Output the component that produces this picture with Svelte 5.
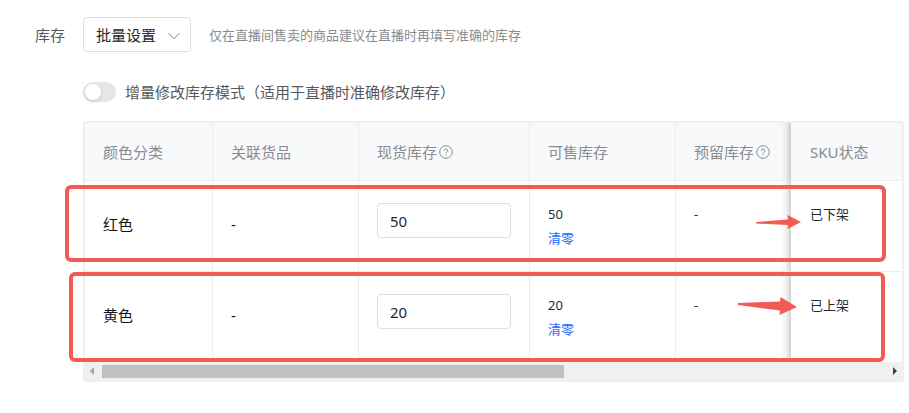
<script>
    let mode = $state("batch");
    let incremental = $state(false);
    let rows = $state([
        { color: "红色", goods: "-", stock: 50, sellable: 50, reserved: "-", status: "已下架" },
        { color: "黄色", goods: "-", stock: 20, sellable: 20, reserved: "-", status: "已上架" },
    ]);

    function clearStock(row) {
        row.stock = 0;
        row.sellable = 0;
    }
</script>

{#snippet help()}
    <svg class="help" viewBox="0 0 14 14" aria-hidden="true">
        <circle cx="7" cy="7" r="6.3" />
        <path d="M5.3 5.7a1.7 1.7 0 1 1 2.5 1.5c-.6.3-.8.6-.8 1.2M7 9.4v1" />
    </svg>
{/snippet}

<div class="page">
    <div class="form-row">
        <label class="form-label" for="mode">库存</label>
        <div class="select-wrap">
            <select id="mode" bind:value={mode}>
                <option value="batch">批量设置</option>
                <option value="single">单独设置</option>
            </select>
            <svg class="chevron" viewBox="0 0 12 8" aria-hidden="true">
                <path d="M0.5 1 6 6.8 11.5 1" />
            </svg>
        </div>
        <span class="hint">仅在直播间售卖的商品建议在直播时再填写准确的库存</span>
    </div>

    <div class="content">
        <label class="switch-row">
            <input class="switch" type="checkbox" bind:checked={incremental} />
            <span>增量修改库存模式（适用于直播时准确修改库存）</span>
        </label>

        <div class="table-wrap">
            <table>
                <colgroup>
                    <col class="col-color" />
                    <col class="col-goods" />
                    <col class="col-stock" />
                    <col class="col-goods" />
                    <col />
                    <col class="col-status" />
                </colgroup>
                <thead>
                    <tr>
                        <th>颜色分类</th>
                        <th>关联货品</th>
                        <th><span class="head">现货库存{@render help()}</span></th>
                        <th>可售库存</th>
                        <th class="last"><span class="head">预留库存{@render help()}</span></th>
                        <th class="fixed">SKU状态</th>
                    </tr>
                </thead>
                <tbody>
                    {#each rows as row}
                        <tr>
                            <td class="middle">{row.color}</td>
                            <td class="middle">{row.goods}</td>
                            <td>
                                <input
                                    class="stock"
                                    type="text"
                                    aria-label="{row.color}现货库存"
                                    bind:value={row.stock}
                                />
                            </td>
                            <td class="small">
                                <div>{row.sellable}</div>
                                <button type="button" onclick={() => clearStock(row)}>清零</button>
                            </td>
                            <td class="small last">{row.reserved}</td>
                            <td class="small fixed">{row.status}</td>
                        </tr>
                    {/each}
                </tbody>
            </table>

            <div class="scrollbar">
                <svg class="arrow-left" viewBox="0 0 4 8" aria-hidden="true"><path d="M4 0v8L0 4z" /></svg>
                <div class="track"><div class="thumb"></div></div>
                <svg class="arrow-right" viewBox="0 0 4 8" aria-hidden="true"><path d="M0 0v8l4-4z" /></svg>
            </div>

            <div class="mark mark-off">
                <svg viewBox="0 0 45 14" width="45" height="14">
                    <path d="M0 7 32 4.5 31.5 0 45 7 31.5 14 32 10 0 8.5z" />
                </svg>
            </div>
            <div class="mark mark-on">
                <svg viewBox="0 0 59 18" width="59" height="18">
                    <path d="M0 6 42 4.5 42.5 0 59 10 41.5 18 42 13.5 0 8z" />
                </svg>
            </div>
        </div>
    </div>
</div>

<style>
    :global(body) {
        background: #fff;
    }

    .page {
        padding: 17px 5px 31px 35px;
        font-family: "Noto Sans", "Noto Sans CJK SC", sans-serif;
        font-size: 15px;
        line-height: 24px;
        color: #55585c;
    }

    .form-row {
        display: flex;
        align-items: center;
    }

    .form-label {
        width: 48px;
    }

    .select-wrap {
        position: relative;
        width: 108px;
        margin-right: 18px;
    }

    select,
    .stock {
        box-sizing: border-box;
        display: block;
        height: 35px;
        padding: 0 12px;
        border: 1px solid #dcdee1;
        border-radius: 4px;
        background: #fff;
        color: #252931;
        font-family: inherit;
        font-size: 15px;
        outline: none;
    }

    select {
        width: 100%;
        appearance: none;
    }

    select:focus,
    .stock:focus {
        border-color: #1966ff;
    }

    .chevron {
        position: absolute;
        right: 11px;
        top: 15px;
        width: 12px;
        height: 8px;
        fill: none;
        stroke: #898b8f;
        pointer-events: none;
    }

    .hint {
        font-size: 13px;
        color: #898b8f;
    }

    .content {
        padding-left: 48px;
    }

    .switch-row {
        display: flex;
        align-items: center;
        gap: 9px;
        padding: 28px 0 17px;
    }

    .switch {
        appearance: none;
        width: 33px;
        height: 20px;
        margin: 0;
        padding: 2px;
        box-sizing: border-box;
        border-radius: 10px;
        background: #e6e6e6;
    }

    .switch::before {
        content: "";
        display: block;
        width: 16px;
        height: 16px;
        border-radius: 50%;
        background: #fff;
        box-shadow: 0 2px 4px rgba(0, 0, 0, 0.12);
    }

    .switch:checked {
        background: #1966ff;
    }

    .switch:checked::before {
        margin-left: auto;
    }

    .table-wrap {
        position: relative;
        border: 2px solid #eeeff0;
        border-radius: 4px;
    }

    table {
        width: 100%;
        table-layout: fixed;
        border-collapse: separate;
        border-spacing: 0;
    }

    .col-color {
        width: 128px;
    }

    .col-goods {
        width: 146px;
    }

    .col-stock {
        width: 171px;
    }

    .col-status {
        width: 111px;
    }

    th,
    td {
        box-sizing: border-box;
        padding: 0 18px;
        border-right: 1px solid #ebecee;
        border-bottom: 1px solid #ebecee;
        text-align: left;
        white-space: nowrap;
    }

    th {
        height: 58px;
        background: #f8f9fb;
        color: #898b8f;
        font-weight: 400;
    }

    td {
        height: 91px;
        padding: 21px 18px 20px;
        vertical-align: top;
        color: #12141a;
    }

    tbody tr:last-child td {
        height: 90px;
        border-bottom: 0;
    }

    .middle {
        padding-top: 31px;
    }

    .last,
    .fixed {
        border-right: 0;
    }

    .fixed {
        position: relative;
        padding-left: 19px;
    }

    .fixed::before {
        content: "";
        position: absolute;
        top: 0;
        bottom: 0;
        right: 100%;
        width: 10px;
        background: linear-gradient(to right, rgba(0, 0, 0, 0), rgba(0, 0, 0, 0.05) 50%, rgba(0, 0, 0, 0.18));
    }

    .head {
        display: flex;
        align-items: center;
        gap: 2px;
    }

    .help {
        flex: none;
        width: 14px;
        height: 14px;
        fill: none;
        stroke: #898b8f;
    }

    .stock {
        width: 134px;
        margin-top: 1px;
    }

    .small {
        font-size: 13px;
        color: #252931;
    }

    .small button {
        display: block;
        padding: 0;
        border: 0;
        background: none;
        color: #1966ff;
        font: inherit;
        cursor: pointer;
    }

    .scrollbar {
        display: flex;
        align-items: center;
        height: 18px;
        padding: 0 5px;
        background: #f0f0f0;
    }

    .scrollbar svg {
        width: 4px;
        height: 8px;
    }

    .arrow-left {
        fill: #a3a3a3;
    }

    .arrow-right {
        fill: #404040;
    }

    .track {
        flex: 1;
        margin: 0 8px;
    }

    .thumb {
        width: 59%;
        height: 13px;
        background: #c1c1c1;
    }

    /* callouts drawn over the two sku rows */
    .mark {
        position: absolute;
        box-sizing: border-box;
        border: 4px solid #f25b54;
        border-radius: 6px;
        pointer-events: none;
    }

    .mark svg {
        position: absolute;
        fill: #f25b54;
    }

    .mark-off {
        top: 62px;
        left: -20px;
        right: 16px;
        height: 77px;
    }

    .mark-off svg {
        top: 26px;
        right: 81px;
    }

    .mark-on {
        top: 149px;
        left: -16px;
        right: 17px;
        height: 90px;
    }

    .mark-on svg {
        top: 21px;
        right: 84px;
    }
</style>
